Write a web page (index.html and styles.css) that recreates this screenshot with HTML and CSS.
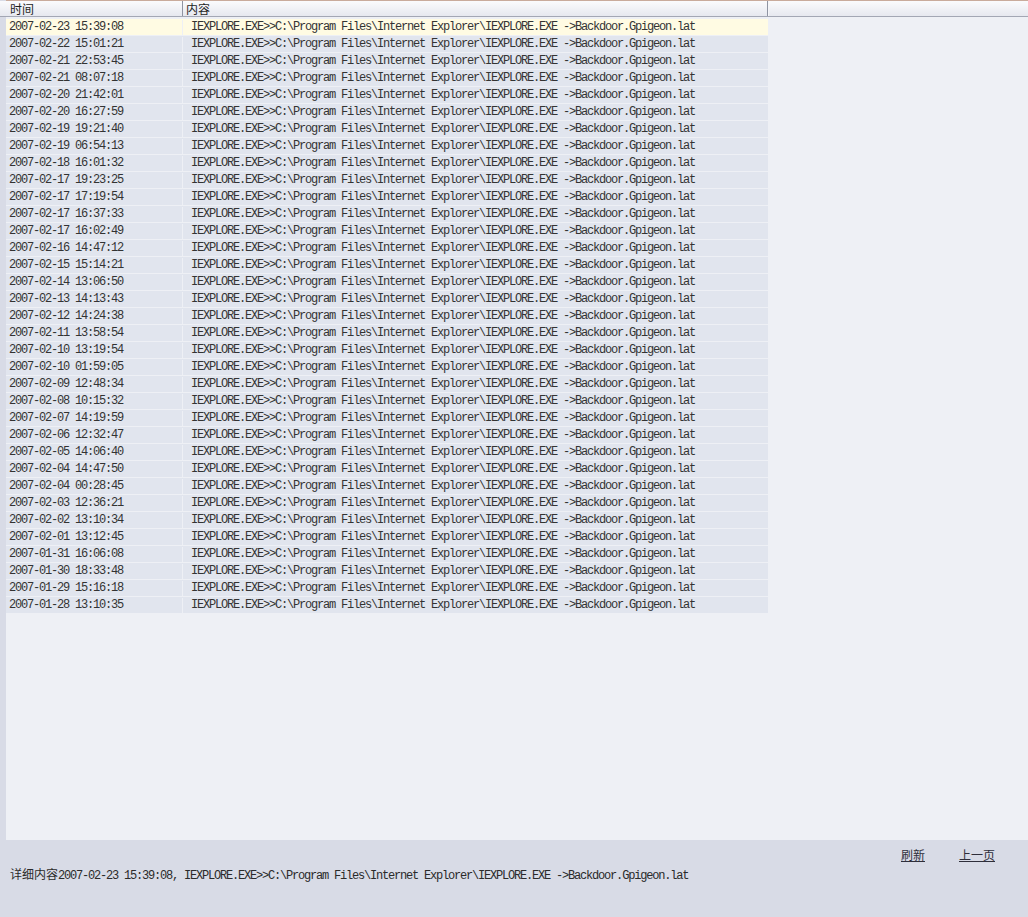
FILE: index.html
```html
<!DOCTYPE html>
<html lang="zh">
<head>
<meta charset="utf-8">
<title>日志</title>
<link rel="stylesheet" href="styles.css">
</head>
<body>
<div class="app">
  <div class="list">
    <div class="head">
      <div class="hcell c1">时间</div>
      <div class="hcell c2">内容</div>
      <div class="hcell c3"></div>
    </div>
    <div class="rows" id="rows"></div>
  </div>
  <div class="bottom">
    <div class="links">
      <a class="link" href="#">刷新</a>
      <a class="link" href="#">上一页</a>
    </div>
    <div class="detail"><span class="cjk">详细内容</span><span class="mono">2007-02-23 15:39:08, IEXPLORE.EXE&gt;&gt;C:\Program Files\Internet Explorer\IEXPLORE.EXE -&gt;Backdoor.Gpigeon.lat</span></div>
  </div>
</div>
<script src="app.js"></script>
</body>
</html>
```
FILE: app.js
```js
var times = [
"2007-02-23 15:39:08","2007-02-22 15:01:21","2007-02-21 22:53:45","2007-02-21 08:07:18",
"2007-02-20 21:42:01","2007-02-20 16:27:59","2007-02-19 19:21:40","2007-02-19 06:54:13",
"2007-02-18 16:01:32","2007-02-17 19:23:25","2007-02-17 17:19:54","2007-02-17 16:37:33",
"2007-02-17 16:02:49","2007-02-16 14:47:12","2007-02-15 15:14:21","2007-02-14 13:06:50",
"2007-02-13 14:13:43","2007-02-12 14:24:38","2007-02-11 13:58:54","2007-02-10 13:19:54",
"2007-02-10 01:59:05","2007-02-09 12:48:34","2007-02-08 10:15:32","2007-02-07 14:19:59",
"2007-02-06 12:32:47","2007-02-05 14:06:40","2007-02-04 14:47:50","2007-02-04 00:28:45",
"2007-02-03 12:36:21","2007-02-02 13:10:34","2007-02-01 13:12:45","2007-01-31 16:06:08",
"2007-01-30 18:33:48","2007-01-29 15:16:18","2007-01-28 13:10:35"];
var content = "IEXPLORE.EXE>>C:\\Program Files\\Internet Explorer\\IEXPLORE.EXE ->Backdoor.Gpigeon.lat";
var rows = document.getElementById("rows");
times.forEach(function (t, i) {
  var r = document.createElement("div");
  r.className = "row" + (i === 0 ? " sel" : "");
  var a = document.createElement("div");
  a.className = "cell c1 mono";
  a.textContent = t;
  var b = document.createElement("div");
  b.className = "cell c2 mono";
  b.textContent = content;
  r.appendChild(a);
  r.appendChild(b);
  rows.appendChild(r);
});
```
FILE: styles.css
```css
html, body {
  margin: 0;
  padding: 0;
}
body {
  width: 1028px;
  height: 917px;
  overflow: hidden;
  background: #d8dbe6;
  font-family: "Noto Sans CJK SC", "Liberation Sans", sans-serif;
  font-size: 12px;
  color: #2a2a2a;
}
.app {
  display: flex;
  flex-direction: column;
  height: 917px;
}
.list {
  height: 840px;
  margin-left: 6px;
  background: #eef0f5;
  border-top: 1px solid #c9ab9c;
  box-sizing: border-box;
}
.head {
  display: flex;
  height: 16px;
  box-sizing: border-box;
  background: linear-gradient(#fbfbfd, #e6e8ef);
  border-bottom: 1px solid #a3a7b4;
  margin-left: -6px;
  padding-left: 6px;
}
.hcell {
  line-height: 15px;
  font-size: 12px;
  color: #1e1e1e;
  box-sizing: border-box;
  border-right: 1px solid #8f94a2;
  padding-left: 4px;
}
.hcell.c1 { width: 177px; }
.hcell.c2 { width: 585px; padding-left: 3px; }
.hcell.c3 { flex: 1; border-right: 0; border-left: 1px solid #f4f5f8; }
.rows {
  margin-top: 2px;
  width: 762px;
}
.row {
  display: flex;
  height: 17px;
  box-sizing: border-box;
  background: #e1e5ee;
  border-bottom: 1px solid #eef0f5;
  padding-top: 1px;
}
.row.sel {
  background: #fffbe3;
}
.cell {
  line-height: 15px;
  white-space: nowrap;
  color: #333;
}
.cell.c1 {
  width: 177px;
  padding-left: 3px;
  box-sizing: border-box;
  border-right: 1px solid #eef0f5;
}
.cell.c2 {
  padding-left: 8px;
}
.mono {
  font-family: "Liberation Mono", monospace;
  font-size: 12px;
  letter-spacing: -1.2px;
}
.bottom {
  flex: 1;
  background: #d8dbe6;
}
.links {
  display: flex;
  justify-content: flex-end;
  gap: 34px;
  padding: 7px 33px 0 0;
  height: 19px;
}
.link {
  color: #2e2e3a;
  text-decoration: underline;
  font-size: 12px;
  line-height: 15px;
}
.detail {
  padding-left: 10px;
  line-height: 16px;
  white-space: nowrap;
  color: #2a2a2a;
}
.cjk {
  font-size: 12px;
}
```
